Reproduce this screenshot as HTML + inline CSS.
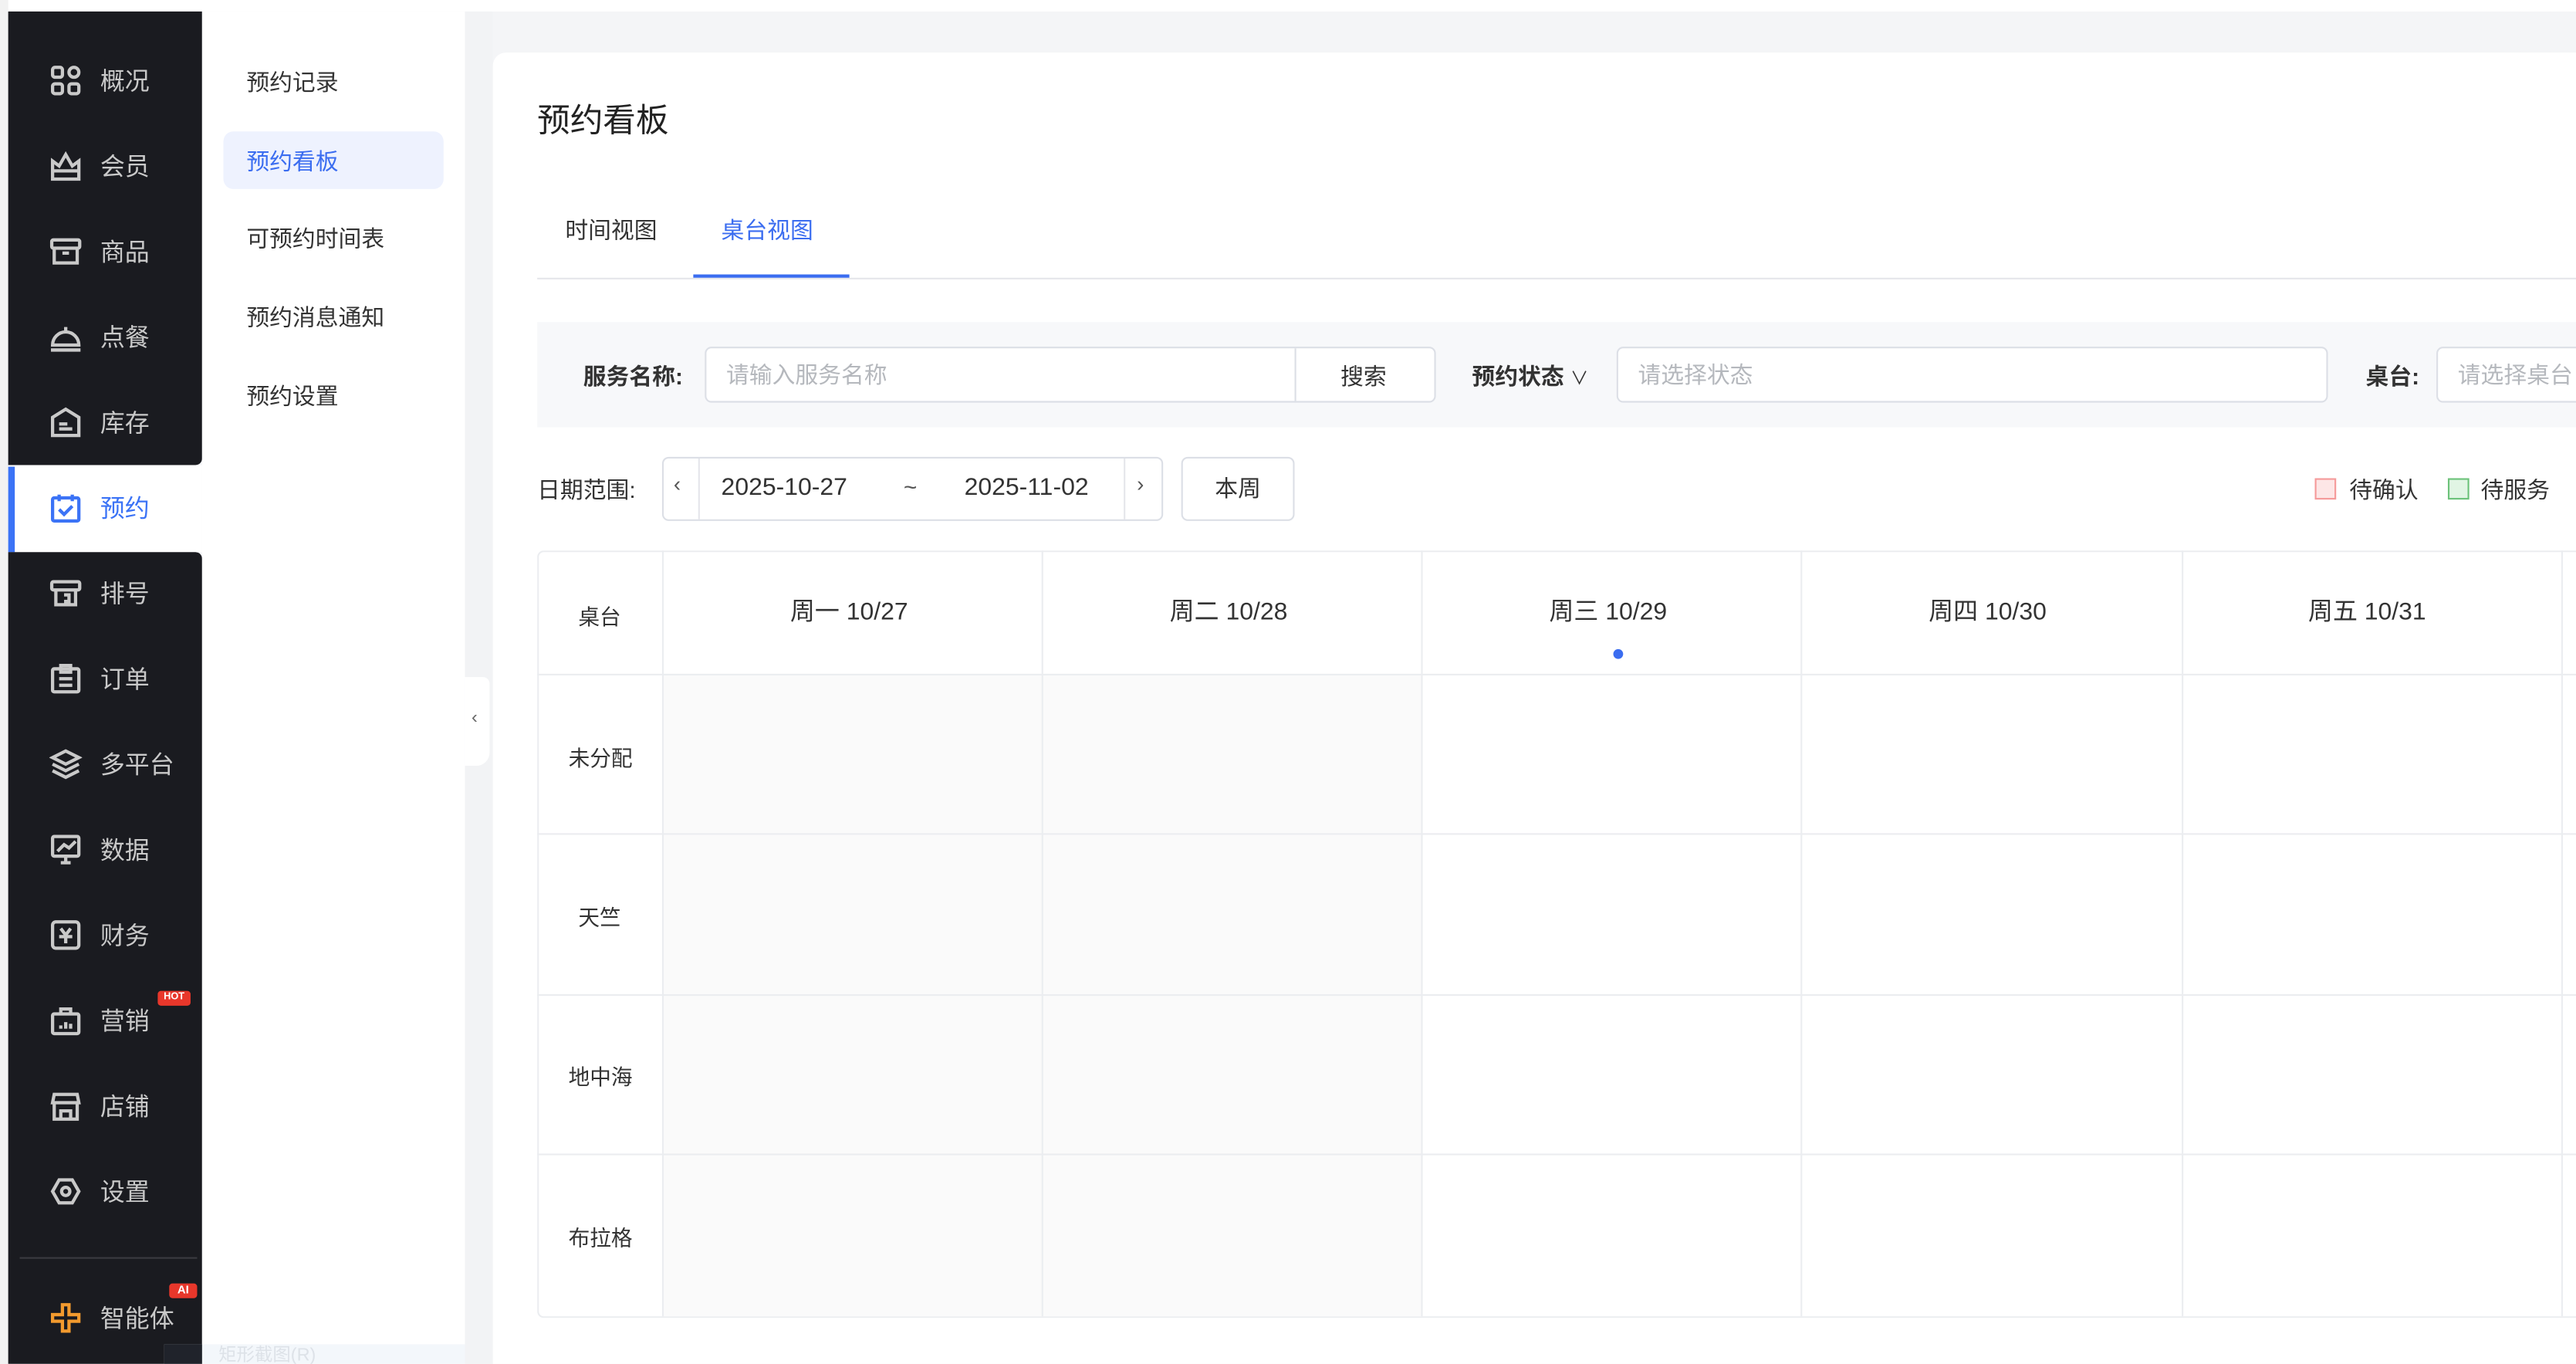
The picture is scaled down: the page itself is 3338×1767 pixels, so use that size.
<!DOCTYPE html>
<html><head><meta charset="utf-8">
<style>
*{box-sizing:border-box;margin:0;padding:0}
html,body{width:3338px;height:1767px;overflow:hidden;background:#fff}
#w{position:absolute;left:0;top:0;width:1568px;height:830px;transform:scale(2.12883);transform-origin:0 0;background:#f4f5f7;font-family:"Liberation Sans","Noto Sans CJK SC",sans-serif;color:#333;overflow:hidden}
.a{position:absolute}
.nav{left:5px;width:118px;background:#1a1b20}
.ni{position:absolute;left:5px;width:118px;height:52px;color:#c9c9c9;font-size:15px}
.ni span{position:absolute;left:56px;top:50%;transform:translateY(-50%)}
.ni svg{position:absolute;left:25px;top:50%;transform:translateY(-50%)}
.sub{position:absolute;left:150px;font-size:14px;color:#333}
.td{position:absolute;border-right:1px solid #ebedf0;border-bottom:1px solid #ebedf0}
.lbl{font-size:14px;color:#333}
.inp{position:absolute;height:34px;border:1px solid #dcdfe6;border-radius:4px;background:#fff;font-size:14px;color:#b5b8bd;line-height:32px;padding-left:12px}
</style></head><body><div id="w">
<div class="a" style="left:0;top:0;width:1568px;height:7px;background:#fff"></div>
<div class="a" style="left:0;top:0;width:5px;height:830px;background:#f2f2f2"></div>
<!-- dark nav -->
<div class="a nav" style="top:7px;height:276px;border-radius:0 0 4px 0"></div>
<div class="a" style="left:5px;top:283px;width:118px;height:53px;background:#fff"></div>
<div class="a" style="left:5px;top:284px;width:4px;height:52px;background:#3b73f6"></div>
<div class="a nav" style="top:336px;height:494px;border-radius:0 4px 0 0"></div>
<div class="a" style="left:12px;top:765px;width:108px;height:1px;background:#3a3b40"></div>

<div class="ni" style="top:23px"><svg width="20" height="20" viewBox="0 0 20 20" fill="none" stroke="#c9c9c9" stroke-width="2"><rect x="2" y="2" width="6" height="6" rx="1.5"/><rect x="12" y="2" width="6" height="6" rx="3"/><rect x="2" y="12" width="6" height="6" rx="1.5"/><rect x="12" y="12" width="6" height="6" rx="1.5"/></svg><span>概况</span></div>
<div class="ni" style="top:75px"><svg width="20" height="20" viewBox="0 0 20 20" fill="none" stroke="#c9c9c9" stroke-width="2"><path d="M2 7l4 3 4-7 4 7 4-3v11H2z"/><path d="M2 13h16"/></svg><span>会员</span></div>
<div class="ni" style="top:127px"><svg width="20" height="20" viewBox="0 0 20 20" fill="none" stroke="#c9c9c9" stroke-width="2"><rect x="1.5" y="3" width="17" height="5" rx="1"/><path d="M3 8v9h14V8M8 11h4"/></svg><span>商品</span></div>
<div class="ni" style="top:179px"><svg width="20" height="20" viewBox="0 0 20 20" fill="none" stroke="#c9c9c9" stroke-width="2"><path d="M2 15a8 8 0 0116 0z"/><path d="M1 18h18M10 4v3"/></svg><span>点餐</span></div>
<div class="ni" style="top:231px"><svg width="20" height="20" viewBox="0 0 20 20" fill="none" stroke="#c9c9c9" stroke-width="2"><path d="M2 7l8-5 8 5v11H2z"/><path d="M6 11h5M6 14h8"/></svg><span>库存</span></div>
<div class="ni" style="top:283px;color:#3b73f6"><svg width="20" height="20" viewBox="0 0 20 20" fill="none" stroke="#3b73f6" stroke-width="2"><rect x="2" y="4" width="16" height="14" rx="1"/><path d="M6 2v4M14 2v4M6 11l3 3 5-5"/></svg><span>预约</span></div>
<div class="ni" style="top:335px"><svg width="20" height="20" viewBox="0 0 20 20" fill="none" stroke="#c9c9c9" stroke-width="2"><rect x="1.5" y="3" width="17" height="5" rx="1"/><path d="M4 8v9h12V8M9 11h3v4H9"/></svg><span>排号</span></div>
<div class="ni" style="top:387px"><svg width="20" height="20" viewBox="0 0 20 20" fill="none" stroke="#c9c9c9" stroke-width="2"><rect x="2" y="4" width="16" height="14" rx="1"/><path d="M7 2h6v4H7zM6 10h8M6 14h8"/></svg><span>订单</span></div>
<div class="ni" style="top:439px"><svg width="20" height="20" viewBox="0 0 20 20" fill="none" stroke="#c9c9c9" stroke-width="2"><path d="M10 2l8 4-8 4-8-4z M2 10l8 4 8-4 M2 14l8 4 8-4"/></svg><span>多平台</span></div>
<div class="ni" style="top:491px"><svg width="20" height="20" viewBox="0 0 20 20" fill="none" stroke="#c9c9c9" stroke-width="2"><rect x="2" y="2" width="16" height="12" rx="1"/><path d="M5 11l4-4 3 2 4-4M7 18h6M10 14v4"/></svg><span>数据</span></div>
<div class="ni" style="top:543px"><svg width="20" height="20" viewBox="0 0 20 20" fill="none" stroke="#c9c9c9" stroke-width="2"><rect x="2" y="2" width="16" height="16" rx="2"/><path d="M7 6l3 4 3-4M6 11h8M10 10v5"/></svg><span>财务</span></div>
<div class="ni" style="top:595px"><svg width="20" height="20" viewBox="0 0 20 20" fill="none" stroke="#c9c9c9" stroke-width="2"><rect x="2" y="6" width="16" height="12" rx="1"/><path d="M7 6V3h6v3M7 15v-2M10 15v-4M13 15v-3"/></svg><span>营销</span></div>
<div class="a" style="left:96px;top:603px;width:20px;height:9px;background:#e8372b;border-radius:2px;color:#fff;font-size:6px;font-weight:bold;line-height:9px;text-align:center">HOT</div>
<div class="ni" style="top:647px"><svg width="20" height="20" viewBox="0 0 20 20" fill="none" stroke="#c9c9c9" stroke-width="2"><path d="M3 3h14l1 5H2z"/><path d="M3 8v10h14V8M7 18v-5h6v5"/></svg><span>店铺</span></div>
<div class="ni" style="top:699px"><svg width="20" height="20" viewBox="0 0 20 20" fill="none" stroke="#c9c9c9" stroke-width="2"><path d="M6 3h8l4 7-4 7H6l-4-7z"/><circle cx="10" cy="10" r="2.5"/></svg><span>设置</span></div>
<div class="ni" style="top:776px"><svg width="20" height="20" viewBox="0 0 20 20" fill="none" stroke="#f29a2e" stroke-width="2"><path d="M8 2h4v6h6v4h-6v6H8v-6H2V8h6z"/></svg><span>智能体</span></div>
<div class="a" style="left:103px;top:781px;width:17px;height:9px;background:#e8372b;border-radius:2px;color:#fff;font-size:7px;font-weight:bold;line-height:9px;text-align:center">AI</div>

<!-- submenu -->
<div class="a" style="left:123px;top:7px;width:160px;height:823px;background:#fff"></div>
<div class="a" style="left:283px;top:7px;width:17px;height:823px;background:#f2f3f5"></div>
<div class="a" style="left:283px;top:412px;width:15px;height:54px;background:#fff;border-radius:0 4px 8px 0"></div>
<div class="a" style="left:287px;top:431px;font-size:11px;color:#666">‹</div>
<div class="a" style="left:136px;top:80px;width:134px;height:35px;background:#eef2fe;border-radius:6px"></div>
<div class="sub" style="top:40px">预约记录</div>
<div class="sub" style="top:88px;color:#3b6df0">预约看板</div>
<div class="sub" style="top:135px">可预约时间表</div>
<div class="sub" style="top:183px">预约消息通知</div>
<div class="sub" style="top:231px">预约设置</div>
<div class="a" style="left:100px;top:818px;width:183px;height:12px;background:#f3f7fb"></div>
<div class="a" style="left:100px;top:818px;width:23px;height:12px;background:#20232b"></div>
<div class="a" style="left:133px;top:818px;font-size:11px;color:#dde2e8;line-height:14px">矩形截图(R)</div>

<!-- main card -->
<div class="a" style="left:300px;top:32px;width:1280px;height:810px;background:#fff;border-radius:8px"></div>
<div class="a" style="left:327px;top:57px;font-size:20px;color:#222">预约看板</div>
<div class="a lbl" style="left:344px;top:130px">时间视图</div>
<div class="a lbl" style="left:439px;top:130px;color:#3b6df0">桌台视图</div>
<div class="a" style="left:327px;top:169px;width:1241px;height:1px;background:#e5e6eb"></div>
<div class="a" style="left:422px;top:167px;width:95px;height:2px;background:#3b6df0"></div>

<div class="a" style="left:327px;top:196px;width:1241px;height:64px;background:#f7f8fa"></div>
<div class="a lbl" style="left:355px;top:219px;font-weight:bold">服务名称:</div>
<div class="inp" style="left:429px;top:211px;width:445px;border-radius:4px">请输入服务名称</div>
<div class="a" style="left:788px;top:212px;width:1px;height:32px;background:#dcdfe6"></div>
<div class="a lbl" style="left:816px;top:219px">搜索</div>
<div class="a lbl" style="left:896px;top:219px;font-weight:bold">预约状态 <span style="font-weight:normal;font-size:11px">∨</span></div>
<div class="inp" style="left:984px;top:211px;width:433px">请选择状态</div>
<div class="a lbl" style="left:1440px;top:219px;font-weight:bold">桌台:</div>
<div class="inp" style="left:1483px;top:211px;width:100px">请选择桌台</div>

<div class="a lbl" style="left:327px;top:288px">日期范围:</div>
<div class="a" style="left:403px;top:278px;width:305px;height:39px;border:1px solid #dcdfe6;border-radius:4px"></div>
<div class="a" style="left:425px;top:279px;width:1px;height:37px;background:#e5e6eb"></div>
<div class="a" style="left:684px;top:279px;width:1px;height:37px;background:#e5e6eb"></div>
<div class="a" style="left:410px;top:287px;font-size:13px;color:#555">‹</div>
<div class="a" style="left:692px;top:287px;font-size:13px;color:#555">›</div>
<div class="a" style="left:439px;top:288px;font-size:15px;color:#333">2025-10-27</div>
<div class="a" style="left:550px;top:288px;font-size:14px;color:#555">~</div>
<div class="a" style="left:587px;top:288px;font-size:15px;color:#333">2025-11-02</div>
<div class="a" style="left:719px;top:278px;width:69px;height:39px;border:1px solid #dcdfe6;border-radius:4px;font-size:14px;text-align:center;line-height:37px">本周</div>
<div class="a" style="left:1409px;top:291px;width:13px;height:13px;border:1px solid #f59a9a;background:#fde6e6"></div>
<div class="a lbl" style="left:1430px;top:288px">待确认</div>
<div class="a" style="left:1490px;top:291px;width:13px;height:13px;border:1px solid #6cc27a;background:#e1f5e4"></div>
<div class="a lbl" style="left:1510px;top:288px">待服务</div>

<!-- table -->
<div class="a" style="left:327px;top:335px;width:1260px;height:467px;border:1px solid #ebedf0;border-right:none;border-radius:4px 0 0 4px"></div>
<div class="a" style="left:404px;top:411px;width:462px;height:390px;background:#fafafa"></div>
<div class="a" style="left:327px;top:410px;width:1241px;height:1px;background:#ebedf0"></div>
<div class="a" style="left:327px;top:507px;width:1241px;height:1px;background:#ebedf0"></div>
<div class="a" style="left:327px;top:605px;width:1241px;height:1px;background:#ebedf0"></div>
<div class="a" style="left:327px;top:702px;width:1241px;height:1px;background:#ebedf0"></div>
<div class="a" style="left:403px;top:335px;width:1px;height:466px;background:#ebedf0"></div>
<div class="a" style="left:634px;top:335px;width:1px;height:466px;background:#ebedf0"></div>
<div class="a" style="left:865px;top:335px;width:1px;height:466px;background:#ebedf0"></div>
<div class="a" style="left:1096px;top:335px;width:1px;height:466px;background:#ebedf0"></div>
<div class="a" style="left:1328px;top:335px;width:1px;height:466px;background:#ebedf0"></div>
<div class="a" style="left:1559px;top:335px;width:1px;height:466px;background:#ebedf0"></div>
<div class="a" style="left:352px;top:365px;font-size:13px">桌台</div>
<div class="a" style="left:481px;top:361px;font-size:15px">周一 10/27</div>
<div class="a" style="left:712px;top:361px;font-size:15px">周二 10/28</div>
<div class="a" style="left:943px;top:361px;font-size:15px">周三 10/29</div>
<div class="a" style="left:1174px;top:361px;font-size:15px">周四 10/30</div>
<div class="a" style="left:1405px;top:361px;font-size:15px">周五 10/31</div>
<div class="a" style="left:982px;top:395px;width:6px;height:6px;border-radius:3px;background:#3b6df0"></div>
<div class="a" style="left:346px;top:451px;font-size:13px">未分配</div>
<div class="a" style="left:352px;top:548px;font-size:13px">天竺</div>
<div class="a" style="left:346px;top:645px;font-size:13px">地中海</div>
<div class="a" style="left:346px;top:743px;font-size:13px">布拉格</div>
</div></body></html>
